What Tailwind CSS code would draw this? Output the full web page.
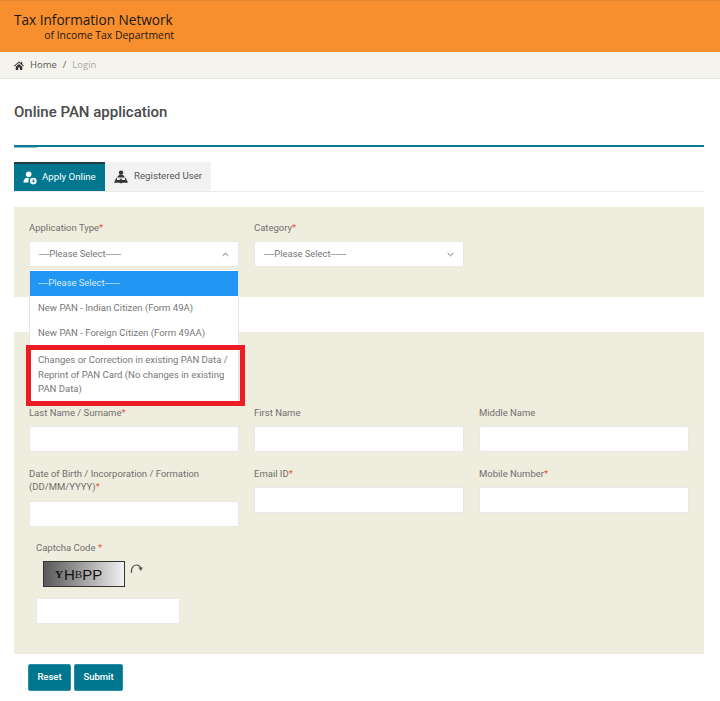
<!DOCTYPE html>
<html><head><meta charset="utf-8"><script src="https://cdn.jsdelivr.net/npm/@tailwindcss/browser@4"></script></head>
<body class="bg-white font-['Roboto',sans-serif] text-[#6f6f6f] overflow-hidden">
<div class="relative w-[720px] h-[701px] overflow-hidden">
<header class="h-[52px] bg-[#f78f2e] border-t border-[#e2862f] pl-[14px] pt-[10px] font-['Open_Sans',sans-serif] text-[#1c1712]">
  <div class="w-[160px]">
    <div class="text-[13.600px] leading-[17px] whitespace-nowrap">Tax Information Network</div>
    <div class="text-[10.400px] leading-[14px] text-right whitespace-nowrap">of Income Tax Department</div>
  </div>
</header>
<nav class="h-[27px] bg-[#f5f4ec] border-b border-[#e6e6e0] pl-[14px] flex items-center text-[9.500px] font-['Open_Sans',sans-serif]">
  <svg class="w-[10px] h-[9px] mr-[6px] text-[#333]" viewBox="0 0 20 18" fill="currentColor"><path d="M10 1 0 9.500l1.300 1.400L10 3.600l8.700 7.300L20 9.500 16.500 6.500V2h-2.600v2.300zM3.500 11.500V18h4.700v-4.800h3.600V18h4.700v-6.500L10 6z"/></svg>
  <span class="text-[#555]">Home</span><span class="mx-[6px] text-[#666]">/</span><span class="text-[#a8a8a8]">Login</span>
</nav>
<main class="pl-[14px] pr-[16px]">
  <h1 class="mt-[23px] h-[20px] leading-[20px] text-[15px] font-medium text-[#4a4a4a]">Online PAN application</h1>
  <div class="mt-[23px] border-b-2 border-[#0a7d94]"></div>
  <div class="h-px w-[23px] bg-[#8fc5d0]"></div>
  <div class="mt-[14px] flex h-[30px] border-b border-[#eaeaea] items-stretch">
    <div class="w-[91px] bg-[#00778f] border-t-2 border-[#273c44] flex items-center pl-[9px] text-white text-[9.700px]">
      <svg class="w-[14px] h-[14px] mr-[5px]" viewBox="0 0 16 16" fill="#fff"><circle cx="6.500" cy="3.800" r="3.200"/><path d="M0.500 13c0-2.800 1.700-5 3.700-5.300 1 .6 2.500.7 3.400.2C6.300 9 5.800 11 6.400 13z"/><circle cx="11.800" cy="11.500" r="3.800"/><path d="M11.300 9.500h1v1.500h1.500v1h-1.500v1.500h-1V12H9.800v-1h1.500z" fill="#00778f"/></svg>
      Apply Online
    </div>
    <div class="w-[106px] bg-[#f2f2f2] flex items-center pl-[9px] text-[#555] text-[9.700px]">
      <svg class="w-[14px] h-[14px] mr-[6px]" viewBox="0 0 16 16" fill="#333"><circle cx="8" cy="3" r="2.500"/><path d="M3.800 8.500c.2-2 2-3 4.200-3s4 1 4.200 3z"/><path d="M2.500 9 0 14.500h6.500L8 15.500l1.500-1H16L13.500 9h-1.200l.5 2.500H3.200l.5-2.500z"/><path d="M6.500 10h3v1.200h-3z"/></svg>
      Registered User
    </div>
  </div>
  <section class="relative mt-[15px] h-[90px] bg-[#efeddd] pl-[15px] pt-[15px] grid grid-cols-[210px_210px] gap-x-[15px] content-start">
    <div>
      <div class="text-[9.500px] leading-[12px]">Application Type<span class="text-[#e2583a]">*</span></div>
      <div class="mt-[7px] h-[26px] bg-white rounded-[2px] border border-[#e8e8e8] flex items-center justify-between pl-[9px] pr-[9px] text-[9.400px] text-[#777]">----Please Select------
        <svg class="w-[7px] h-[5px]" viewBox="0 0 10 6" fill="none" stroke="#555" stroke-width="1.200"><path d="M1 5 5 1l4 4"/></svg>
      </div>
    </div>
    <div>
      <div class="text-[9.500px] leading-[12px]">Category<span class="text-[#e2583a]">*</span></div>
      <div class="mt-[7px] h-[26px] bg-white rounded-[2px] border border-[#e8e8e8] flex items-center justify-between pl-[9px] pr-[9px] text-[9.400px] text-[#777]">----Please Select------
        <svg class="w-[7px] h-[5px]" viewBox="0 0 10 6" fill="none" stroke="#555" stroke-width="1.200"><path d="M1 1l4 4 4-4"/></svg>
      </div>
    </div>
    <div class="absolute left-[15px] top-[63px] w-[210px] z-10 bg-white border-x border-[#e6e6e6] text-[9.550px] text-[#777] pt-px">
      <div class="h-[25px] bg-[#2196f3] text-[#dcecfa] pl-[8px] flex items-center text-[9.400px]">----Please Select------</div>
      <div class="h-[25px] pl-[8px] flex items-center">New PAN - Indian Citizen (Form 49A)</div>
      <div class="h-[25px] pl-[8px] flex items-center">New PAN - Foreign Citizen (Form 49AA)</div>
      <div class="h-[60px] pl-[8px] pr-[6px] pt-[7px] leading-[14.500px]">Changes or Correction in existing PAN Data / Reprint of PAN Card (No changes in existing PAN Data)</div>
    </div>
    <div class="absolute left-[12px] top-[138px] w-[219px] h-[61px] border-[5px] border-[#ed1c24] z-20"></div>
  </section>
  <section class="mt-[35px] h-[322px] bg-[#efeddd] pl-[15px] pt-[75px] text-[9.500px]">
    <div class="grid grid-cols-[210px_210px_210px] gap-x-[15px]">
      <div><div class="leading-[12px]">Last Name / Surname<span class="text-[#e2583a]">*</span></div><div class="mt-[7px] h-[26px] bg-white border border-[#e8e8e8] rounded-[2px]"></div></div>
      <div><div class="leading-[12px]">First Name</div><div class="mt-[7px] h-[26px] bg-white border border-[#e8e8e8] rounded-[2px]"></div></div>
      <div><div class="leading-[12px]">Middle Name</div><div class="mt-[7px] h-[26px] bg-white border border-[#e8e8e8] rounded-[2px]"></div></div>
    </div>
    <div class="mt-[15px] grid grid-cols-[210px_210px_210px] gap-x-[15px] items-start">
      <div><div class="leading-[13px]">Date of Birth / Incorporation / Formation<br>(DD/MM/YYYY)<span class="text-[#e2583a]">*</span></div><div class="mt-[8px] h-[26px] bg-white border border-[#e8e8e8] rounded-[2px]"></div></div>
      <div><div class="leading-[13px]">Email ID<span class="text-[#e2583a]">*</span></div><div class="mt-[7px] h-[26px] bg-white border border-[#e8e8e8] rounded-[2px]"></div></div>
      <div><div class="leading-[13px]">Mobile Number<span class="text-[#e2583a]">*</span></div><div class="mt-[7px] h-[26px] bg-white border border-[#e8e8e8] rounded-[2px]"></div></div>
    </div>
    <div class="pl-[7px] mt-[15px]">
      <div class="leading-[12px]">Captcha Code <span class="text-[#e2583a]">*</span></div>
      <div class="ml-[7px] mt-[7px] flex items-start">
        <div class="w-[82px] h-[26px] border border-[#333] bg-gradient-to-r from-[#5a5a5a] to-[#f2f2f2] flex items-center pl-[11px] text-[#111] leading-none font-['Liberation_Sans',sans-serif]"><span class="text-[11px] font-bold font-['Liberation_Serif',serif]">Y</span><span class="text-[15px] ml-[1px]">H</span><span class="text-[11px] font-['Liberation_Serif',serif]">B</span><span class="text-[15px]">PP</span></div>
        <svg class="ml-[5px] mt-[2px] w-[13px] h-[12px]" viewBox="0 0 13 12" fill="none"><path d="M1.500 10C.8 5.500 3 2 6.500 2c2 0 3.500 1 4.300 3" stroke="#555" stroke-width="1.200"/><path d="M8.300 4.500h4.500L11 8z" fill="#555"/></svg>
      </div>
      <div class="mt-[11px] w-[144px] h-[26px] bg-white border border-[#e8e8e8] rounded-[2px]"></div>
    </div>
  </section>
  <div class="mt-[10px] ml-[14px] flex gap-[3px] text-[9.500px] text-white font-medium">
    <div class="w-[43px] h-[27px] bg-[#00778f] rounded-[2px] border border-[#2b8ea3] flex items-center justify-center">Reset</div>
    <div class="w-[49px] h-[27px] bg-[#00778f] rounded-[2px] border border-[#2b8ea3] flex items-center justify-center">Submit</div>
  </div>
</main>
</div>
</body></html>
